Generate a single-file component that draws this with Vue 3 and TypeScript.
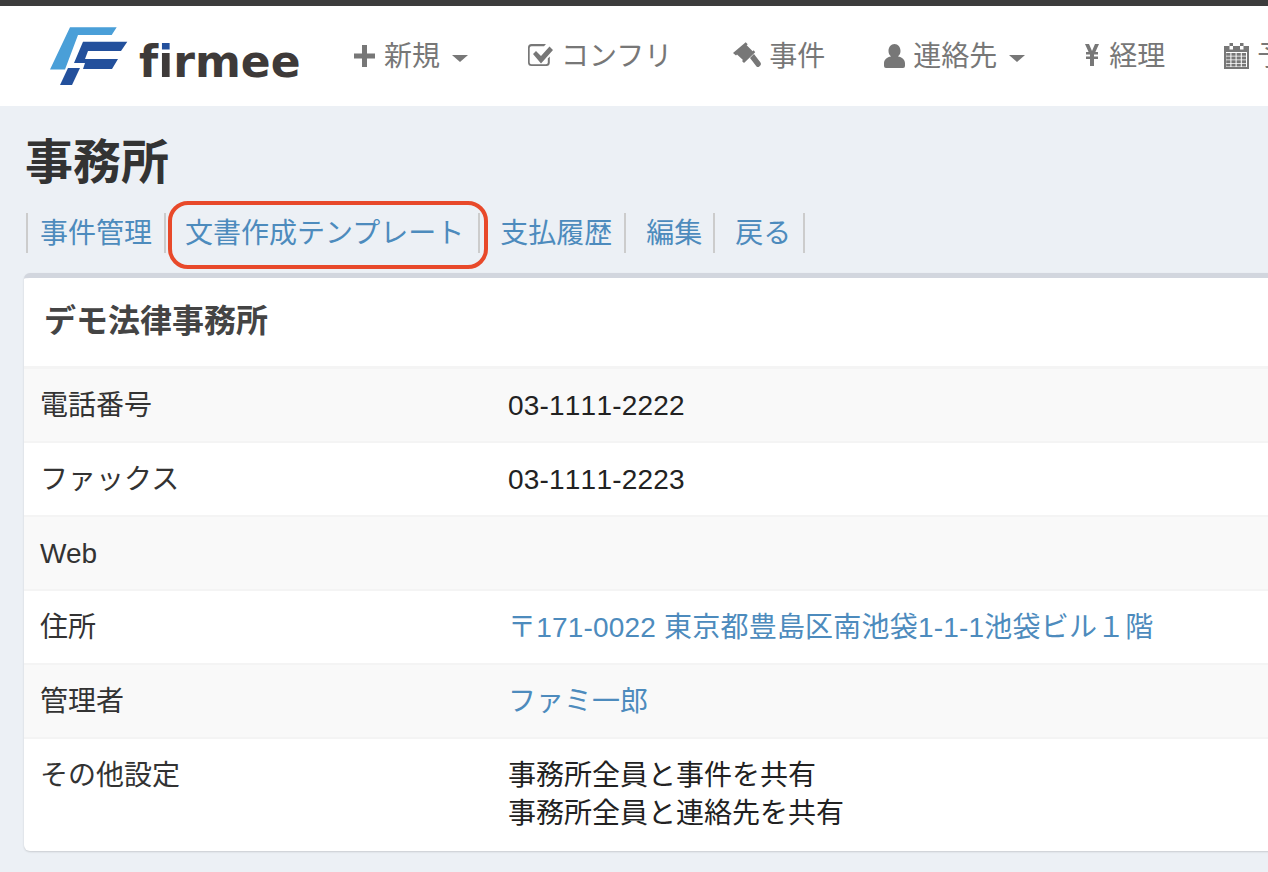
<script setup lang="ts">
interface NavItem { label: string; icon: string; w: number; gap: number; after: number; caret?: boolean }

const calendarCells: string[] = []
for (const y of [11, 14.6, 18.2, 21.8]) {
  for (const x of [3.2, 8.4, 13.6, 18.8]) {
    calendarCells.push(`M${x} ${y}h4.200v2.800h-4.200z`)
  }
}
const calendar = 'M1 4h25v23H1zM3 10v15h21V10zM6.500 1h3.500v6.500H6.500zM17 1h3.500v6.500H17z' + calendarCells.join('')

const nav: NavItem[] = [
  { label: '新規', icon: 'M8 3h5v8.500h8v5h-8V25H8v-8.500H0v-5h8z', w: 21, gap: 9, after: 59, caret: true },
  {
    label: 'コンフリ',
    icon: 'M4.500 2H19l-2 2.200H4.500A1.800 1.800 0 0 0 2.700 6v14.500a1.800 1.800 0 0 0 1.800 1.800H19a1.800 1.800 0 0 0 1.800-1.800v-4l2-2v6.300A3.500 3.500 0 0 1 19 24H4.500A3.500 3.500 0 0 1 1 20.500v-15A3.500 3.500 0 0 1 4.500 2zM6 12l3-3 5 5 8.500-9.500L26 8 14 21.500z',
    w: 24,
    gap: 10,
    after: 61,
  },
  {
    label: '事件',
    icon: 'M12.700.3l2 2-1 1 6 6 1-1 1.500 2L11 21l-2-2 1-1-6-5.500-1 1L0 11zM17 16l4-4 6.500 8.500q1 1.500 0 2.800l-1.200 1.200q-1.300 1.200-2.800 0z',
    w: 27,
    gap: 9,
    after: 59,
  },
  {
    label: '連絡先',
    icon: 'M10.500 2C14 2 16.500 5 16.500 9c0 2.500-1 4-2.500 5.500 4 .5 7 3 7 7V24q0 2-2 2H2q-2 0-2-2v-2.500c0-4 3-6.500 7-7C5.500 13 4.500 11.500 4.500 9c0-4 2.500-7 6-7z',
    w: 21,
    gap: 8,
    after: 58,
    caret: true,
  },
  {
    label: '経理',
    icon: 'M2 2h4l3 7 3-7h4l-3.600 8H15v2.500h-4v2h4V17h-4v7H7v-7H3v-2.500h4v-2H3V10h2.600z',
    w: 18,
    gap: 8,
    after: 58,
  },
  { label: '予定', icon: calendar, w: 26, gap: 8, after: 59 },
]
const tabs = ['事件管理', '文書作成テンプレート', '支払履歴', '編集', '戻る']
const rows: { label: string; lines: string[]; link?: boolean; spaced?: boolean }[] = [
  { label: '電話番号', lines: ['03-1111-2222'], spaced: true },
  { label: 'ファックス', lines: ['03-1111-2223'], spaced: true },
  { label: 'Web', lines: [] },
  { label: '住所', lines: ['〒171-0022 東京都豊島区南池袋1-1-1池袋ビル１階'], link: true, spaced: true },
  { label: '管理者', lines: ['ファミ一郎'], link: true },
  { label: 'その他設定', lines: ['事務所全員と事件を共有', '事務所全員と連絡先を共有'] },
]
</script>

<template>
  <div class="page">
    <div class="topline"></div>
    <header class="navbar">
      <a class="logo">
        <svg class="mark" width="78" height="58" viewBox="0 0 78 58">
          <path fill="#4a9fd8" d="M20 .3h46.700L61.700 8H28L15 42.500H0z" />
          <path fill="#23509c" d="M33 14.700h44.300L71 24H38l-3 8h33l-6 10H33l2-6H24z" />
          <path fill="#23509c" d="M18 41h12l-8 17H10z" />
        </svg>
        <span class="wordmark">f<span class="i">i</span>rmee</span>
      </a>
      <nav class="menu">
        <a
          v-for="item in nav"
          :key="item.label"
          class="menu-item"
          :style="{ marginRight: item.after + 'px' }"
        >
          <svg
            :width="item.w"
            height="28"
            :viewBox="`0 0 ${item.w} 28`"
            class="ico"
            :style="{ marginRight: item.gap + 'px' }"
          >
            <path :d="item.icon" fill-rule="evenodd" />
          </svg>
          <span class="menu-label">{{ item.label }}</span>
          <i v-if="item.caret" class="caret"></i>
        </a>
      </nav>
    </header>

    <main class="content">
      <h1>事務所</h1>
      <div class="tabs">
        <a v-for="tab in tabs" :key="tab" class="tab">{{ tab }}</a>
        <span class="highlight"></span>
      </div>

      <section class="card">
        <h2>デモ法律事務所</h2>
        <div class="table">
          <div v-for="row in rows" :key="row.label" class="row">
            <div class="label">{{ row.label }}</div>
            <div class="value" :class="{ link: row.link, spaced: row.spaced }">
              <div v-for="line in row.lines" :key="line">{{ line }}</div>
            </div>
          </div>
        </div>
      </section>
    </main>
  </div>
</template>

<style>
html, body { margin: 0; overflow: hidden; background: #ecf0f5; }
</style>

<style scoped>
.page {
  width: 1268px;
  height: 872px;
  overflow: hidden;
  background: #ecf0f5;
  color: #333;
  font-family: "Liberation Sans", "Noto Sans CJK JP", sans-serif;
  font-size: 28px;
}
.topline { height: 6px; background: #3c3c3c; }
.navbar {
  height: 100px;
  background: #fff;
  display: flex;
  align-items: center;
  padding-left: 50px;
  white-space: nowrap;
}
.logo { display: flex; align-items: flex-start; width: 248px; flex: none; }
.mark { flex: none; margin-right: 11px; }
.wordmark {
  font-family: "DejaVu Sans", sans-serif;
  font-weight: 700;
  font-size: 44px;
  line-height: 46px;
  color: #3e3a39;
  margin-top: 12px;
}
.i {
  display: inline-block;
  background: linear-gradient(#23509c 0 12px, #3e3a39 12px);
  -webkit-background-clip: text;
  background-clip: text;
  color: transparent;
}
.menu { display: flex; margin-left: 56px; flex: none; }
.menu-item {
  display: flex;
  align-items: center;
  color: #777;
}
.menu-label { padding-bottom: 4px; }
.ico { fill: #777; flex: none; overflow: visible; }
.caret {
  width: 0;
  height: 0;
  margin-left: 12px;
  margin-top: 4px;
  border-left: 8px solid transparent;
  border-right: 8px solid transparent;
  border-top: 7px solid #777;
}
.content { padding: 0 0 0 24px; }
h1 {
  margin: 0;
  padding: 30px 0 0 1px;
  font-size: 48px;
  line-height: 54px;
  font-weight: 700;
  color: #333;
}
.tabs {
  position: relative;
  display: flex;
  height: 40px;
  margin-top: 23px;
  padding-left: 2px;
}
.tab {
  color: #4d8bbd;
  line-height: 42px;
  padding: 0 11px 0 14px;
  border-right: 2px solid #ccc;
  margin-right: 6px;
  white-space: nowrap;
}
.tab:first-child {
  border-left: 2px solid #ccc;
  padding-left: 12px;
  padding-right: 12px;
  margin-right: 0;
}
.tab:nth-child(2) { padding-left: 19px; padding-right: 14px; }
.tab:nth-child(3) { padding-right: 12px; }
.tab:nth-child(5) { padding-right: 12px; }
.highlight {
  position: absolute;
  left: 144px;
  top: -12px;
  width: 312px;
  height: 60px;
  border: 4px solid #e8492a;
  border-radius: 20px;
  pointer-events: none;
}
.card {
  width: 1400px;
  margin-top: 20px;
  background: #fff;
  border-top: 5px solid #d2d6de;
  border-radius: 6px;
  box-shadow: 0 1px 2px rgba(0, 0, 0, 0.15);
}
h2 {
  margin: 0;
  padding: 0 20px;
  height: 88px;
  line-height: 86px;
  font-size: 32px;
  font-weight: 700;
  color: #444;
  border-bottom: 3px solid #f4f4f4;
}
.row {
  display: flex;
  height: 74px;
  border-bottom: 2px solid #f4f4f4;
  padding: 18px 16px 0;
  box-sizing: border-box;
  line-height: 38px;
  color: #333;
}
.row:nth-child(odd) { background: #f9f9f9; }
.row:last-child { height: 112px; border-bottom: 0; }
.label { width: 468px; flex: none; }
.value { color: #222; font-kerning: none; }
.value.spaced { letter-spacing: 0.2px; }
.value.link { color: #4d8bbd; }
</style>
